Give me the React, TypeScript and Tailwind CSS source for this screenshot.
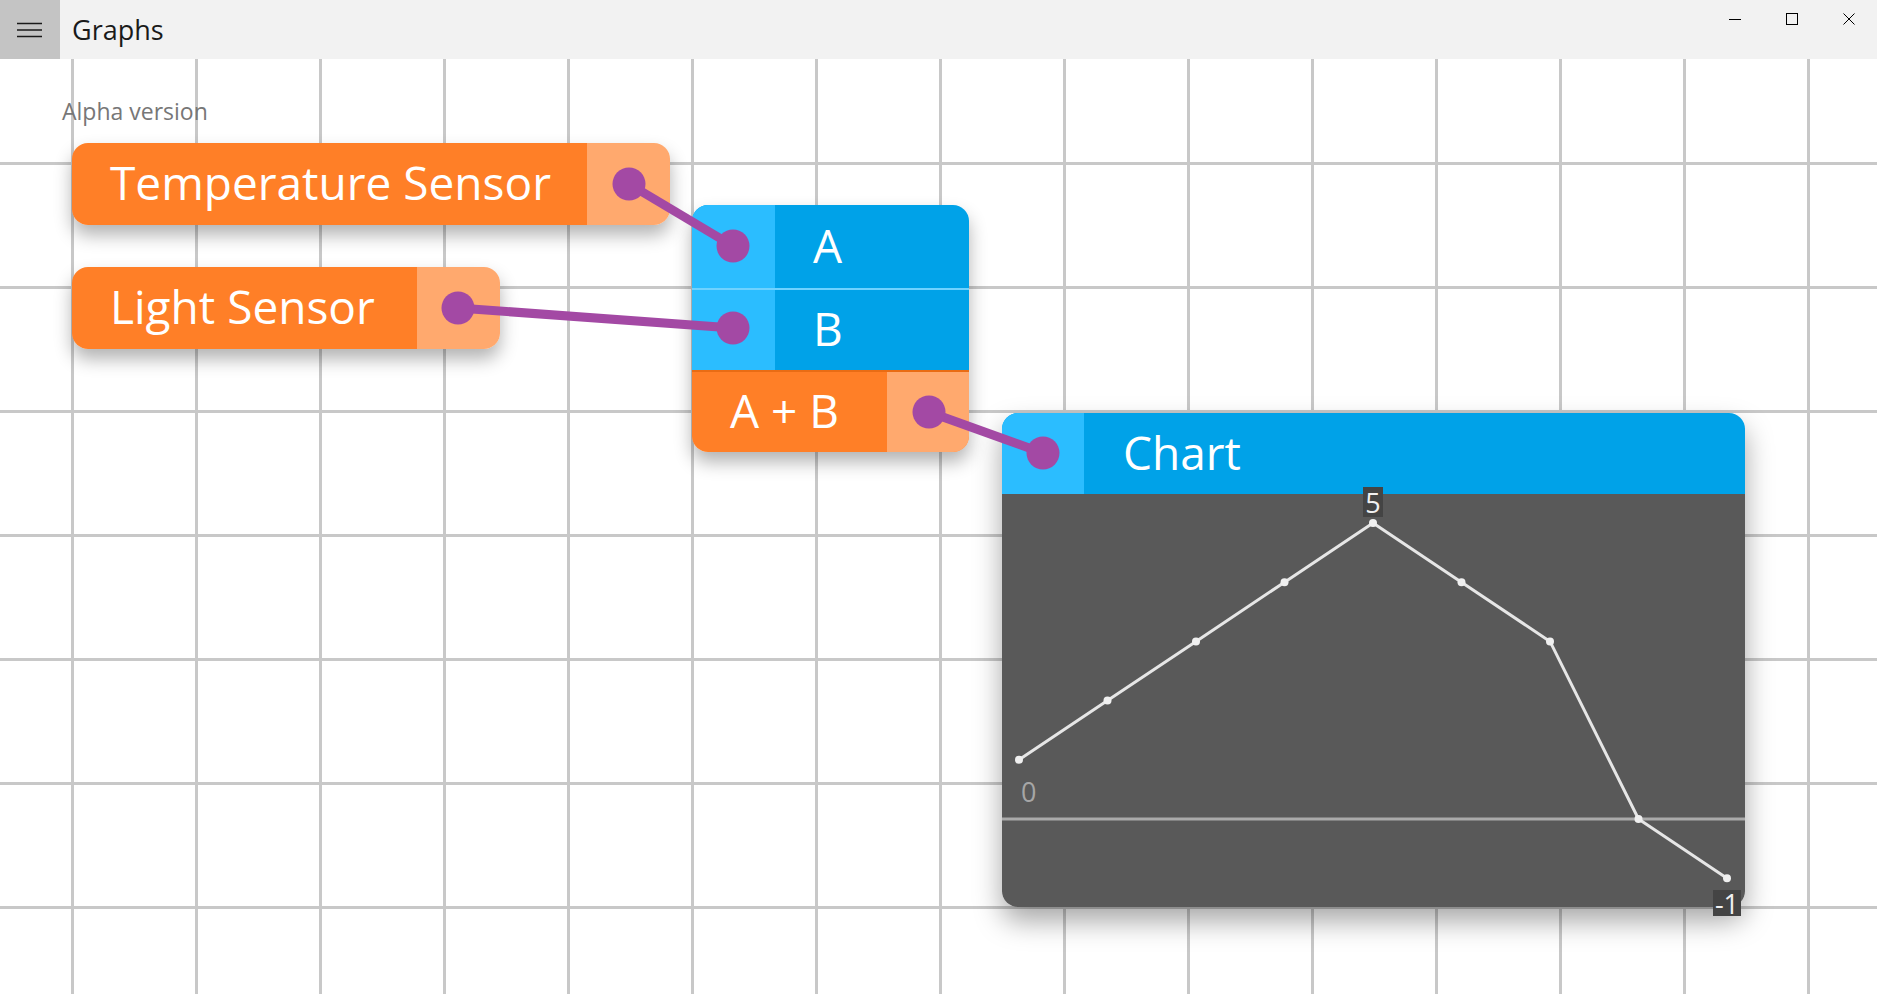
import React from "react";

const FONT = "font-['Open_Sans','Noto_Sans',sans-serif]";

// chart data, body-local coordinates
const VALUES = [1, 2, 3, 4, 5, 4, 3, 0, -1];
const X0 = 17;
const STEP = 88.5;
const ZERO_Y = 325;
const UNIT = 59.2;

function chartPoints() {
  return VALUES.map((v, i) => ({ x: X0 + i * STEP, y: ZERO_Y - v * UNIT }));
}

function TitleBar() {
  return (
    <div className="flex h-[59px] shrink-0 items-center bg-[#f2f2f2]">
      <div className="flex h-full w-[60px] items-center justify-center bg-[#c4c4c4]">
        <svg width="26" height="16" viewBox="0 0 26 16">
          <path d="M0 1.5H25M0 8H25M0 14.5H25" stroke="#1a1a1a" strokeWidth="1.6" />
        </svg>
      </div>
      <div className={`${FONT} ml-[12px] text-[27px] leading-none text-[#1a1a1a]`}>Graphs</div>
      <div className="ml-auto flex h-full items-start">
        <div className="flex h-[38px] w-[57px] items-center justify-center">
          <svg width="12" height="12" viewBox="0 0 12 12">
            <path d="M0 6.5H12" stroke="#000" strokeWidth="1" />
          </svg>
        </div>
        <div className="flex h-[38px] w-[57px] items-center justify-center">
          <svg width="12" height="12" viewBox="0 0 12 12">
            <rect x="0.5" y="0.5" width="11" height="11" fill="none" stroke="#000" strokeWidth="1" />
          </svg>
        </div>
        <div className="flex h-[38px] w-[57px] items-center justify-center">
          <svg width="12" height="12" viewBox="0 0 12 12">
            <path d="M0.5 0.5L11.5 11.5M11.5 0.5L0.5 11.5" stroke="#000" strokeWidth="1" />
          </svg>
        </div>
      </div>
    </div>
  );
}

function SourceNode({ label, className }: { label: string; className: string }) {
  return (
    <div className={`absolute flex h-[82px] rounded-[16px] shadow-[0_10px_18px_rgba(0,0,0,0.3)] ${className}`}>
      <div className={`${FONT} flex flex-1 items-center rounded-l-[16px] bg-[#ff7f27] pb-[4px] pl-[38px] text-[46px] leading-none text-white`}>
        {label}
      </div>
      <div className="w-[83px] rounded-r-[16px] bg-[#ffa96e]" />
    </div>
  );
}

function AddNode() {
  return (
    <div className="absolute left-[692px] top-[146px] flex h-[247px] w-[277px] flex-col rounded-[16px] shadow-[0_10px_18px_rgba(0,0,0,0.3)]">
      <div className="flex h-[83px] rounded-t-[16px] bg-[#00a2e8]">
        <div className="w-[83px] rounded-tl-[16px] bg-[#2bbdff]" />
        <div className={`${FONT} flex items-center pb-[4px] pl-[38px] text-[46px] leading-none text-white`}>A</div>
      </div>
      <div className="h-[2px] bg-[#6fd2ff]" />
      <div className="flex h-[80px] bg-[#00a2e8]">
        <div className="w-[83px] bg-[#2bbdff]" />
        <div className={`${FONT} flex items-center pb-[4px] pl-[38px] text-[46px] leading-none text-white`}>B</div>
      </div>
      <div className="h-[2px] bg-[#e96c14]" />
      <div className="flex h-[80px] rounded-b-[16px] bg-[#ff7f27]">
        <div className={`${FONT} flex flex-1 items-center pb-[4px] pl-[38px] text-[46px] leading-none text-white`}>
          A + B
        </div>
        <div className="w-[82px] rounded-br-[16px] bg-[#ffa96e]" />
      </div>
    </div>
  );
}

function ChartNode() {
  const pts = chartPoints();
  return (
    <div className="absolute left-[1002px] top-[354px] flex h-[494px] w-[743px] flex-col rounded-[16px] shadow-[0_14px_28px_rgba(0,0,0,0.35)]">
      <div className="flex h-[81px] shrink-0 rounded-t-[16px] bg-[#00a2e8]">
        <div className="w-[82px] rounded-tl-[16px] bg-[#2bbdff]" />
        <div className={`${FONT} flex items-center pb-[4px] pl-[39px] text-[46px] leading-none text-white`}>Chart</div>
      </div>
      <div className="relative flex-1 rounded-b-[16px] bg-[#595959]">
        <svg className="absolute inset-0" width="743" height="413" viewBox="0 0 743 413">
          <line x1="0" y1={ZERO_Y} x2="743" y2={ZERO_Y} stroke="#aaaaaa" strokeWidth="3" />
          <polyline
            points={pts.map((p) => `${p.x},${p.y}`).join(" ")}
            fill="none"
            stroke="#e6e6e6"
            strokeWidth="3"
            strokeLinejoin="round"
          />
          {pts.map((p, i) => (
            <circle key={i} cx={p.x} cy={p.y} r="4" fill="#f0f0f0" />
          ))}
        </svg>
      </div>
      <div className={`${FONT} absolute left-[19px] top-[365px] text-[27px] leading-none text-[#a6a6a6]`}>0</div>
      <div className={`${FONT} absolute left-[361px] top-[74px] flex h-[30px] w-[20px] items-center justify-center bg-[#444444] text-[27px] leading-none text-[#f0f0f0]`}>
        5
      </div>
      <div className={`${FONT} absolute left-[711px] top-[477px] flex h-[26px] w-[28px] items-center justify-center bg-[#444444] text-[27px] leading-none text-[#f0f0f0]`}>
        -1
      </div>
    </div>
  );
}

const LINKS = [
  { a: [629, 125], b: [733, 187] },
  { a: [458, 249], b: [733, 269] },
  { a: [929, 353], b: [1043, 394] },
];

function Links() {
  return (
    <svg className="pointer-events-none absolute inset-0 z-10" width="1877" height="935">
      {LINKS.map((l, i) => (
        <g key={i} fill="#a349a4">
          <line x1={l.a[0]} y1={l.a[1]} x2={l.b[0]} y2={l.b[1]} stroke="#a349a4" strokeWidth="9" />
          <circle cx={l.a[0]} cy={l.a[1]} r="16.5" />
          <circle cx={l.b[0]} cy={l.b[1]} r="16.5" />
        </g>
      ))}
    </svg>
  );
}

export default function App() {
  return (
    <div className="flex h-[994px] w-[1877px] flex-col overflow-hidden bg-white">
      <TitleBar />
      <div className="relative flex-1 bg-white bg-[linear-gradient(to_right,#c8c8c8_3px,transparent_3px),linear-gradient(to_bottom,#c8c8c8_3px,transparent_3px)] bg-[size:124px_124px] bg-[position:71px_103px] pl-[62px] pt-[41px]">
        <div className={`${FONT} text-[23px] leading-none text-[#777777]`}>Alpha version</div>
        <SourceNode label="Temperature Sensor" className="left-[72px] top-[84px] w-[598px]" />
        <SourceNode label="Light Sensor" className="left-[72px] top-[208px] w-[428px]" />
        <AddNode />
        <ChartNode />
        <Links />
      </div>
    </div>
  );
}
